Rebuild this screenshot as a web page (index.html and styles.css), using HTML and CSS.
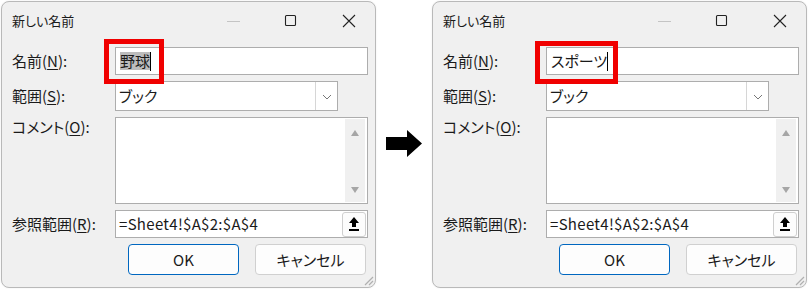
FILE: index.html
```html
<!DOCTYPE html>
<html lang="ja">
<head>
<meta charset="utf-8">
<title>新しい名前</title>
<link rel="stylesheet" href="styles.css">
</head>
<body>
<div class="stage">

  <div class="dialog">
    <div class="titlebar">
      <span class="title">新しい名前</span>
      <div class="winbtns">
        <svg class="wb" width="14" height="14" viewBox="0 0 14 14"><line x1="1" y1="7.5" x2="14" y2="7.5" stroke="#c4c4c4" stroke-width="1"/></svg>
        <svg class="wb" width="14" height="14" viewBox="0 0 14 14"><rect x="1.5" y="1.5" width="10" height="10" rx="1" fill="none" stroke="#222" stroke-width="1.1"/></svg>
        <svg class="wb" width="14" height="14" viewBox="0 0 14 14"><path d="M1 1 L13 13 M13 1 L1 13" stroke="#222" stroke-width="1.1"/></svg>
      </div>
    </div>
    <div class="form">
      <label class="lbl">名前(<u>N</u>):</label>
      <div class="field input name"><span class="sel">野球</span><span class="caret"></span></div>

      <label class="lbl">範囲(<u>S</u>):</label>
      <div class="field select"><span class="val">ブック</span><span class="drop"><svg width="10" height="6" viewBox="0 0 10 6"><path d="M1 1 L5 5 L9 1" fill="none" stroke="#777" stroke-width="1"/></svg></span></div>

      <label class="lbl top">コメント(<u>O</u>):</label>
      <div class="field textarea"><span class="area"></span><span class="scroll"><svg width="10" height="8" viewBox="0 0 10 8"><path d="M1 7 L5 1 L9 7 Z" fill="#a6a6a6"/></svg><svg width="10" height="8" viewBox="0 0 10 8"><path d="M1 1 L5 7 L9 1 Z" fill="#a6a6a6"/></svg></span></div>

      <label class="lbl">参照範囲(<u>R</u>):</label>
      <div class="field input ref"><span class="val latin">=Sheet4!$A$2:$A$4</span><span class="refbtn"><svg width="12" height="16" viewBox="0 0 12 16"><path d="M6 1 L11 7 L8 7 L8 11 L4 11 L4 7 L1 7 Z" fill="#000"/><rect x="1" y="13" width="10" height="2" fill="#000"/></svg></span></div>
    </div>
    <div class="buttons">
      <button class="btn ok">OK</button>
      <button class="btn">キャンセル</button>
    </div>
    <div class="redbox left"></div>
    <svg class="grip" width="12" height="12" viewBox="0 0 12 12"><path d="M11 3 L3 11 M11 7 L7 11" stroke="#b0b0b0" stroke-width="1.2"/></svg>
  </div>

  <div class="arrowcol">
    <svg width="36" height="27" viewBox="0 0 36 27"><path d="M0 7 L21 7 L21 0 L36 13.5 L21 27 L21 20 L0 20 Z" fill="#000"/></svg>
  </div>

  <div class="dialog">
    <div class="titlebar">
      <span class="title">新しい名前</span>
      <div class="winbtns">
        <svg class="wb" width="14" height="14" viewBox="0 0 14 14"><line x1="1" y1="7.5" x2="14" y2="7.5" stroke="#c4c4c4" stroke-width="1"/></svg>
        <svg class="wb" width="14" height="14" viewBox="0 0 14 14"><rect x="1.5" y="1.5" width="10" height="10" rx="1" fill="none" stroke="#222" stroke-width="1.1"/></svg>
        <svg class="wb" width="14" height="14" viewBox="0 0 14 14"><path d="M1 1 L13 13 M13 1 L1 13" stroke="#222" stroke-width="1.1"/></svg>
      </div>
    </div>
    <div class="form">
      <label class="lbl">名前(<u>N</u>):</label>
      <div class="field input name"><span class="val">スポーツ</span><span class="caret"></span></div>

      <label class="lbl">範囲(<u>S</u>):</label>
      <div class="field select"><span class="val">ブック</span><span class="drop"><svg width="10" height="6" viewBox="0 0 10 6"><path d="M1 1 L5 5 L9 1" fill="none" stroke="#777" stroke-width="1"/></svg></span></div>

      <label class="lbl top">コメント(<u>O</u>):</label>
      <div class="field textarea"><span class="area"></span><span class="scroll"><svg width="10" height="8" viewBox="0 0 10 8"><path d="M1 7 L5 1 L9 7 Z" fill="#a6a6a6"/></svg><svg width="10" height="8" viewBox="0 0 10 8"><path d="M1 1 L5 7 L9 1 Z" fill="#a6a6a6"/></svg></span></div>

      <label class="lbl">参照範囲(<u>R</u>):</label>
      <div class="field input ref"><span class="val latin">=Sheet4!$A$2:$A$4</span><span class="refbtn"><svg width="12" height="16" viewBox="0 0 12 16"><path d="M6 1 L11 7 L8 7 L8 11 L4 11 L4 7 L1 7 Z" fill="#000"/><rect x="1" y="13" width="10" height="2" fill="#000"/></svg></span></div>
    </div>
    <div class="buttons">
      <button class="btn ok">OK</button>
      <button class="btn">キャンセル</button>
    </div>
    <div class="redbox right"></div>
    <svg class="grip" width="12" height="12" viewBox="0 0 12 12"><path d="M11 3 L3 11 M11 7 L7 11" stroke="#b0b0b0" stroke-width="1.2"/></svg>
  </div>

</div>
</body>
</html>
```

FILE: styles.css
```css
* { box-sizing: border-box; }
html, body { margin: 0; padding: 0; background: #ffffff; }
body {
  font-family: "Noto Sans CJK JP", "Noto Sans", sans-serif;
  font-feature-settings: "palt";
  color: #1a1a1a;
  width: 809px;
  height: 289px;
  overflow: hidden;
}
.stage {
  display: flex;
  align-items: flex-start;
  padding: 1px 0 0 1px;
}
.dialog {
  position: relative;
  width: 375px;
  height: 287px;
  background: #f0f0f0;
  border: 1px solid #b9b9b9;
  border-radius: 8px;
  box-shadow: 0 0 2px rgba(0,0,0,0.08);
  display: flex;
  flex-direction: column;
}
.titlebar {
  height: 37px;
  display: flex;
  align-items: center;
  justify-content: space-between;
  padding: 0 0 0 10px;
}
.title {
  font-size: 13px;
  line-height: 16px;
  color: #1a1a1a;
  margin-top: 1px;
}
.winbtns {
  display: flex;
  align-items: center;
  gap: 44px;
  padding-right: 19px;
  margin-top: 1px;
}
.winbtns .wb { display: block; }
.form {
  display: grid;
  grid-template-columns: 103px 253px;
  grid-template-rows: 28px 30px 87px 28px;
  row-gap: 6px;
  padding: 8px 0 0 10px;
}
.form .name { margin-bottom: 1px; }
.lbl {
  font-size: 15px;
  line-height: 20px;
  align-self: center;
  white-space: nowrap;
  color: #1a1a1a;
}
.lbl.top { align-self: start; padding-top: 0; }
.lbl u { text-underline-offset: 2px; }
.field {
  background: #ffffff;
  border: 1px solid #adadad;
  display: flex;
  align-items: center;
  font-size: 15px;
  line-height: 20px;
  padding-left: 4px;
}
.input.name { height: 28px; }
.sel {
  background: #bcbcbc;
  line-height: 18px;
}
.caret {
  display: inline-block;
  width: 1px;
  height: 19px;
  background: #000;
}
.select {
  width: 223px;
  padding-left: 3px;
  justify-content: space-between;
  padding-right: 0;
}
.drop {
  width: 22px;
  height: 100%;
  border-left: 1px solid #d6d6d6;
  display: flex;
  align-items: center;
  justify-content: center;
}
.drop svg { display: block; margin-top: 1px; }
.textarea {
  align-items: stretch;
  padding: 1px 2px 1px 0;
}
.area { flex: 1; }
.scroll {
  width: 20px;
  background: #f0f0f0;
  display: flex;
  flex-direction: column;
  align-items: center;
  justify-content: space-between;
  padding: 10px 0 8px;
}
.scroll svg { display: block; }
.ref {
  justify-content: space-between;
  padding-left: 3px;
  padding-right: 1px;
}
.latin {
  letter-spacing: 0.3px;
}
.refbtn {
  width: 24px;
  height: 25px;
  border: 1px solid #cfcfcf;
  border-radius: 3px;
  background: #fcfcfc;
  display: flex;
  align-items: center;
  justify-content: center;
}
.refbtn svg { display: block; }
.buttons {
  display: flex;
  justify-content: flex-end;
  gap: 16px;
  padding: 6px 9px 0 0;
}
.btn {
  width: 111px;
  height: 31px;
  border: 1px solid #d0d0d0;
  border-radius: 4px;
  background: #fdfdfd;
  font-family: "Noto Sans CJK JP", "Noto Sans", sans-serif;
  font-feature-settings: "palt";
  font-size: 15px;
  line-height: 20px;
  color: #1a1a1a;
  padding: 0;
}
.btn.ok { border-color: #0067c0; }
.redbox {
  position: absolute;
  border: 5px solid #f00000;
}
.redbox.left { left: 102px; top: 37px; width: 60px; height: 45px; }
.redbox.right { left: 102px; top: 39px; width: 83px; height: 43px; }
.grip {
  position: absolute;
  right: 1px;
  bottom: 1px;
}
.arrowcol {
  width: 56px;
  height: 287px;
  display: flex;
  align-items: center;
  justify-content: center;
}
.arrowcol svg { display: block; margin-top: -2px; }
```
